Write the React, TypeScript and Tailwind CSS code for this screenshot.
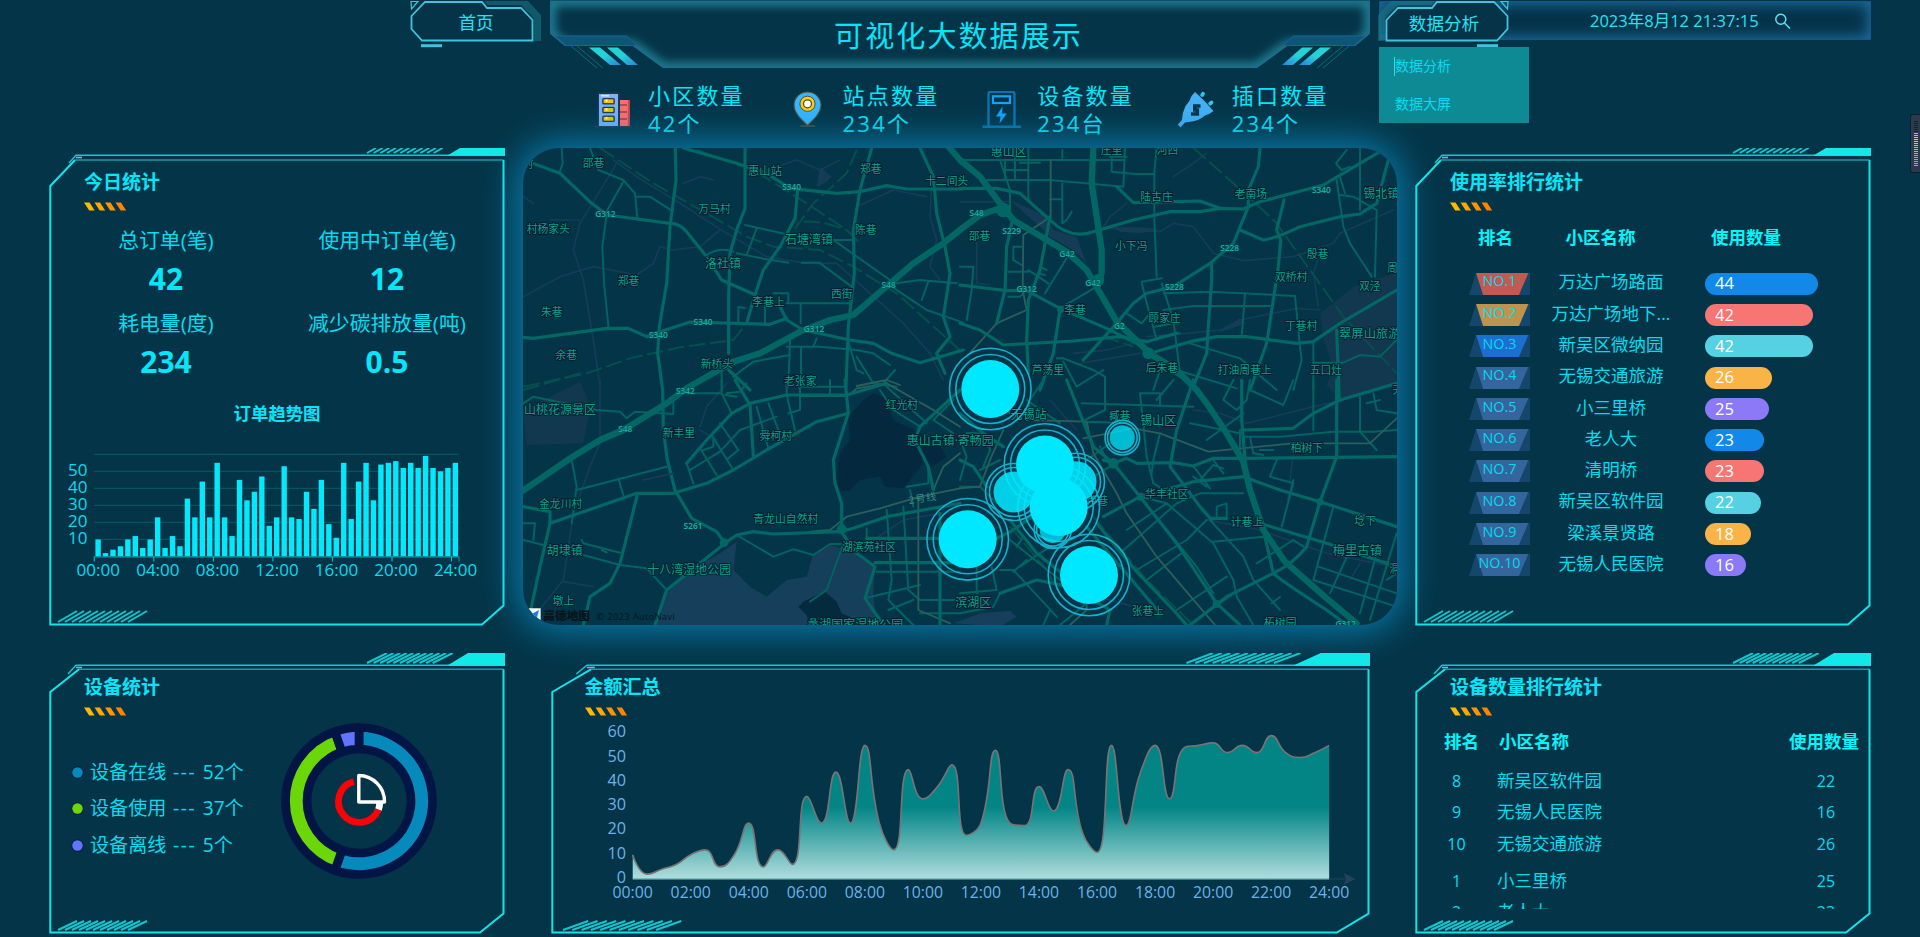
import React from "react";

const SERIES = [
  10, 2, 4, 6, 10, 12, 5, 10, 23, 5, 12, 6, 34, 23, 44, 23, 55, 23, 12, 45, 33, 38, 47, 18, 23, 53, 23, 22, 38, 28,
  45, 19, 11, 55, 22, 44, 55, 33, 54, 55, 56, 52, 55, 52, 59, 52, 50, 52, 55,
];

/* ---------- panel frame ---------- */

type FrameProps = { w: number; h: number; sx?: number; tall?: boolean };

function Frame({ w, h, sx = 1, tall = false }: FrameProps) {
  const g = tall
    ? { y1: 12.3, y2: 16.3, cy: 39, cx: 30, ox: 19, oy: 21, sd: 58, si: 37, st0: 138, st1: 69, sh: 10, sk: 20, rd: 25, rv: 19 }
    : { y1: 7.3, y2: 12, cy: 38, cx: 26, ox: 20, oy: 15, sd: 58, si: 45, st0: 138, st1: 68, sh: 5, sk: 9, rd: 23, rv: 19 };
  const top: number[] = [];
  for (let i = 0; i < 11; i++) top.push(i);
  return (
    <svg className="pointer-events-none absolute inset-0" width={w} height={h} viewBox={`0 0 ${w} ${h}`} fill="none">
      <path d={`M${g.ox * sx} ${g.oy} L${27 * sx} ${g.y1} H${w}`} stroke="#12c9d0" strokeWidth="1.4" />
      <path d={`M${27 * sx} ${g.y1 + 2.2} h${6 * sx}`} stroke="#5cc3d6" strokeWidth="1.6" />
      <path d={`M${g.cx * sx} ${g.y2} H${w - 1.5}`} stroke="#0e9fa8" strokeWidth="1.6" />
      <path
        d={`M${g.cx * sx} ${g.y2} L1.3 ${g.cy} V${h - 1.4} H${w - g.rd * sx} L${w - 1.5} ${h - 1.4 - g.rv} V${g.y2}`}
        stroke="#12e4e8"
        strokeWidth="2"
      />
      <path d={`M${w - g.sd * sx} ${g.y1 + 0.5} L${w - g.si * sx} 0 H${w} V${g.y1 + 0.5} Z`} fill="#12e8e8" />
      {top.map((i) => (
        <path
          key={i}
          d={`M${w - (g.st0 - (i * (g.st0 - g.st1)) / 10.5) * sx} ${g.sh} l${g.sk * sx} ${-g.sh}`}
          stroke="#12c6cc"
          strokeWidth="2"
        />
      ))}
      {top.map((i) => (
        <path
          key={i}
          d={`M${(9 + i * 7) * sx} ${h - 4} l${19 * sx} ${tall ? -9 : -11}`}
          stroke="#12c6cc"
          strokeWidth="2"
        />
      ))}
    </svg>
  );
}

function Panel({
  title,
  children,
  className,
  ...frame
}: FrameProps & { title: string; children: React.ReactNode; className: string }) {
  const inset = frame.sx ? "ml-[33.5px]" : "ml-[35px]";
  return (
    <section className={`relative flex flex-col ${className}`}>
      <Frame {...frame} />
      <h2 className={`mt-[21px] flex h-[27px] items-center text-[19px] font-bold leading-none ${inset}`}>{title}</h2>
      <svg className={`mt-[6px] shrink-0 ${inset}`} width="44" height="9" viewBox="0 0 44 9">
        {["#ffb800", "#ffa600", "#ff9400", "#ff8200"].map((c, i) => (
          <path key={c} d={`M${i * 10.5} 0.5 h5.5 l5.2 8 h-5.5 z`} fill={c} />
        ))}
      </svg>
      {children}
    </section>
  );
}

/* ---------- header ---------- */

function NavFrame({ flip }: { flip?: boolean }) {
  return (
    <svg
      className={flip ? "absolute inset-0 -scale-x-100" : "absolute inset-0"}
      width="132"
      height="48"
      viewBox="0 0 132 48"
      fill="none"
    >
      <path d="M74 1 H118 L131 15 V41 H124 V18 L111 5 H78 Z" fill="#1b7d90" opacity="0.5" />
      <path d="M1.5 16 L15 2 H72 L77 8 H111 L122.5 20 V40.5 H12 L1.5 29 Z" fill="#053347" stroke="#3fc4dc" strokeWidth="1.8" />
      <path d="M1 1.5 H8 L1.5 9 Z" stroke="#3fc4dc" strokeWidth="1.2" />
      <path d="M11 45.7 H32" stroke="#3fc4dc" strokeWidth="3" />
    </svg>
  );
}

function TitleFrame() {
  const wing = (
    <>
      <path d="M5 36 H77 L87 45.5 H16 Z" fill="#0d5674" stroke="#1c60a0" strokeWidth="1" />
      <path d="M21 46 L47 68 M27 46 L53 68" stroke="#0d6a72" strokeWidth="1" />
      <path d="M39 47.5 H50 L71 65 H60 Z" fill="url(#slash)" />
      <path d="M57 47.5 H68 L88 65 H77 Z" fill="url(#slash)" />
    </>
  );
  const outline = "M0.5 1 H819.5 V33.5 L805 45.5 H737 L707 67.5 H113 L83 45.5 H15 L0.5 33.5 Z";
  return (
    <svg className="absolute inset-0" width="820" height="70" viewBox="0 0 820 70" fill="none">
      <defs>
        <linearGradient id="slash" x1="0" y1="0" x2="1" y2="1">
          <stop offset="0.5" stopColor="#22d3d8" />
          <stop offset="1" stopColor="#2a7fd8" />
        </linearGradient>
        <clipPath id="titleClip">
          <path d={outline} />
        </clipPath>
        <filter id="soft" x="-5%" y="-30%" width="110%" height="160%">
          <feGaussianBlur stdDeviation="5" />
        </filter>
      </defs>
      <g clipPath="url(#titleClip)">
        <path d={outline} stroke="#21829a" strokeWidth="10" filter="url(#soft)" />
      </g>
      <path d={outline} stroke="#1d6f92" strokeWidth="1.2" />
      {wing}
      <g transform="translate(820 0) scale(-1 1)">{wing}</g>
    </svg>
  );
}

const BuildingIcon = () => (
  <svg width="40" height="38" viewBox="0 0 40 38">
    <rect x="4.6" y="1.2" width="22" height="34.5" rx="1.5" fill="#26364d" />
    <rect x="6" y="3" width="19" height="32" fill="#74b4fb" />
    <rect x="8" y="4" width="8" height="1.5" fill="#d7eaff" />
    {[7, 15.8, 24.6].map((y) => (
      <g key={y}>
        <rect x="9.2" y={y} width="12.6" height="6.4" rx="1.5" fill="#2b3550" />
        <rect x="10.6" y={y + 1.3} width="9.8" height="3.8" fill="#e9c806" />
        <rect x="12.5" y={y + 1.3} width="2" height="2.6" fill="#fff27a" />
      </g>
    ))}
    <rect x="27" y="9" width="9.6" height="26.5" fill="#ff6f6c" />
    <path d="M27 14 H34 M27 21 H34 M27 28 H34" stroke="#5b2c3d" strokeWidth="1.1" />
    <path d="M35.6 9 V35" stroke="#e03e4f" strokeWidth="1.5" />
    <path d="M0.5 35.8 H39.5" stroke="#26364d" strokeWidth="1.4" />
  </svg>
);

const PinIcon = () => (
  <svg width="40" height="38" viewBox="0 0 40 38">
    <path
      d="M19.5 1 C11.8 1 6 6.8 6 14.2 C6 22 13 28 19.5 34.5 C26 28 33 22 33 14.2 C33 6.8 27.2 1 19.5 1 Z"
      fill="#37b6ff"
      stroke="#5a4a35"
      strokeWidth="1.1"
    />
    <circle cx="19.5" cy="12.8" r="7.6" fill="#ffcf05" stroke="#5a4a35" strokeWidth="1" />
    <circle cx="19.5" cy="12.8" r="4" fill="#fff" stroke="#5a4a35" strokeWidth="1.3" />
    <path d="M12.5 35 H27" stroke="#5a4a35" strokeWidth="1.5" />
  </svg>
);

const ChargerIcon = () => (
  <svg width="40" height="38" viewBox="0 0 40 38" fill="none">
    <path d="M6.5 35.5 V3 Q6.5 0.8 9 0.8 H30 Q32.5 0.8 32.5 3 V35.5" stroke="#0b72ad" strokeWidth="2.4" />
    <path d="M0.5 35.7 H39" stroke="#0b72ad" strokeWidth="2.6" />
    <rect x="11" y="5.3" width="17" height="6.7" stroke="#12a3ff" strokeWidth="2.2" />
    <path d="M20.5 15.5 L14 25.5 H18.5 L17.5 32.5 L24.8 22.5 H20 Z" fill="#12a3ff" />
  </svg>
);

const PlugIcon = () => (
  <svg width="40" height="38" viewBox="0 0 40 38" fill="none">
    <path
      d="M18 1 L27 9.500 L36.500 20 Q33 23 28 24.500 Q22 30 11.500 31 L8 31.500 L3.500 36.500 L0.800 33.500 L5 29 Q5 22 8.500 15 Q13 10.500 14.500 5 Z"
      fill="#44b1f5"
    />
    <path d="M26 2.800 L25.200 4 M34.500 11.500 L33.200 12.500" stroke="#2fc8ee" strokeWidth="3.800" strokeLinecap="round" />
    <path d="M23.500 15 H17.800 V19 H20.300 V23 H14" stroke="#06344a" strokeWidth="3.600" />
  </svg>
);

const STATS = [
  { label: "小区数量", value: "42个", icon: <BuildingIcon /> },
  { label: "站点数量", value: "234个", icon: <PinIcon /> },
  { label: "设备数量", value: "234台", icon: <ChargerIcon /> },
  { label: "插口数量", value: "234个", icon: <PlugIcon /> },
];

function Header() {
  return (
    <header className="flex h-[148px] shrink-0 flex-col">
      <div className="flex h-[70px] items-start pl-[410px] text-[#22e4f5]">
        <div className="relative flex h-[48px] w-[132px] items-center justify-center pb-[2px] text-[17.6px] leading-none">
          <NavFrame />
          <span className="relative">首页</span>
        </div>
        <div className="relative ml-[8px] flex h-[70px] w-[820px] items-center justify-center pr-[3px] pt-px">
          <TitleFrame />
          <h1 className="relative text-[29px] leading-none tracking-[2.1px] text-[#05e6fb]">可视化大数据展示</h1>
        </div>
        <div className="relative z-20 ml-[9px] mt-[1px] flex h-[39px] w-[492px] items-center border border-[#14558c] bg-[#05334a] shadow-[inset_0_0_14px_2px_#1d70a0]">
          <div className="relative flex h-[48px] w-[132px] items-center justify-center pr-[4px] pt-[7px] text-[17.6px] leading-none">
            <div className="absolute left-[-3px] top-[3px] h-[48px] w-[132px]">
              <NavFrame flip />
            </div>
            <span className="relative">数据分析</span>
          </div>
          <div className="ml-[78px] flex items-center gap-[15px] pt-px text-[16.5px] leading-none">
            <span className="whitespace-nowrap">2023年8月12 21:37:15</span>
            <svg width="17" height="17" viewBox="0 0 17 17" fill="none" stroke="#5be4f0" strokeWidth="1.5">
              <circle cx="6.8" cy="6.3" r="5" />
              <path d="M10.5 10 L16 15.5" />
            </svg>
          </div>
          <ul className="absolute left-[-1px] top-[45px] w-[150px] bg-[#0d8a94] text-[14px] leading-none text-[#05dcf2]">
            <li className="flex h-[38px] items-center pl-[15px]">
              <span className="h-[19px] w-px bg-[#20e4f4]" />
              数据分析
            </li>
            <li className="flex h-[38px] items-center pl-[16px]">数据大屏</li>
          </ul>
        </div>
      </div>
      <div className="flex pl-[593px] pt-[12px]">
        {STATS.map((s) => (
          <div key={s.label} className="flex w-[194.6px] items-start">
            <div className="mt-[9px] h-[38px] w-[40px]">{s.icon}</div>
            <div className="ml-[15px] whitespace-nowrap text-[22px] leading-[27.5px] tracking-[2.2px] text-[#05e6fb]">
              <div>{s.label}</div>
              <div>{s.value}</div>
            </div>
          </div>
        ))}
      </div>
    </header>
  );
}

/* ---------- city map ---------- */

type Quad = {
  dx: number;
  dy: number;
  major: string[];
  medium: string[];
  minor: string[];
  rail: string[];
  metro: string[];
  river: string[];
  labels: [string, number, number, number?][];
  tags: [string, number, number][];
};

const QUADS: Quad[] = [
  {
    dx: 0,
    dy: 0,
    major: [
      "M0 1058 L150 955 L240 900 L310 870 L440 790 L500 745 L640 665 L720 640 L840 575 L930 540 L1000 525 L1110 430 L1180 370 L1270 310 L1330 262 L1380 225 L1440 205",
    ],
    medium: [
      "M10 60 L120 100 L215 190 L262 225 L450 250 Q480 250 500 275 L560 350 L605 420 L700 462",
      "M466 24 L468 120 L450 260 L440 430 L418 560 L413 640 L428 750 L430 870 L442 960 L465 1050",
      "M10 592 L40 595 L260 565 L325 565 L380 590 L420 575 L510 546 L750 553 L800 535",
      "M675 24 V205 L650 270 L630 340 L626 470 V640 M626 690 L690 750",
      "M1055 24 L1020 150 L1000 270 L1003 400 L985 560 L978 740",
      "M490 24 L650 70 L740 100 L810 145 L950 160 L1020 155 L1100 137 L1160 147 H1330",
      "M833 150 L825 235 L780 320 L730 390 L700 480 L680 550",
      "M780 500 L800 540 L850 570 L990 600 L1060 610 L1115 640 L1200 668 L1330 630",
      "M1200 24 L1240 110 L1250 220 L1275 320 L1290 400 L1270 530 L1290 590 L1250 640 L1275 700",
    ],
    minor: [
      "M125 24 L128 70 L118 100",
      "M210 24 L235 90 L310 120 L345 160 L352 235 M352 170 H390 L455 212",
      "M310 125 L262 210 L247 320 L252 430 L266 565",
      "M675 255 L810 285 M710 265 L680 345 M650 340 L740 358 L805 368 M845 368 H898 L995 440",
      "M560 345 Q600 320 640 335",
      "M800 490 H990 M842 490 V550 M735 485 V550 M760 460 H805 V485",
      "M800 620 H900 L1010 630 L1060 640 L1110 675 M890 595 L880 620 M843 620 V740 M810 600 L805 740",
      "M605 690 V750 M640 710 L700 665 L810 645 M655 545 V500 L675 505",
      "M1115 440 L1220 510 L1330 548 M1130 430 L1200 420 L1310 430 M1225 425 L1205 480",
      "M940 300 H1000 M940 300 L1110 420",
      "M985 605 L1010 690 L1030 700 M1010 650 L1060 730 L1130 740 M1125 690 L1090 730",
    ],
    rail: [
      "M240 24 L400 130 L560 220 L680 290 L760 320 L900 330 L1000 380 L1130 460 L1330 640",
      "M530 30 L700 90 L860 190 L980 270 L1020 310",
      "M10 740 L200 700 L330 655 L480 622 L640 600 L680 550",
      "M1010 30 L980 100 L880 190 L800 300",
      "M850 245 Q900 240 980 270",
    ],
    metro: ["M1010 738 L1100 720 L1140 735"],
    river: [
      "M280 60 L350 110 L480 190 L620 280 L740 350 L860 370 L950 370 L1050 460 L1150 550 L1230 640 L1270 720",
      "M290 70 L180 250 L160 330 L190 420 L220 600 L240 740",
      "M10 470 L120 410 L220 380 L350 405 L400 370 L420 320 L455 330 L540 320 L600 270",
      "M1235 120 L1230 230 L1250 300 L1230 380 L1260 420",
      "M490 130 L540 110 L580 120",
      "M740 90 L830 60 L900 90 L960 60",
      "M40 190 L10 170 M90 240 L180 240",
      "M1010 200 L1120 150 L1220 170",
    ],
    labels: [
      ["邵巷", 188, 68],
      ["惠山站", 684, 92, 34],
      ["郑巷", 1020, 86],
      ["十二间头", 1215, 122],
      ["万马村", 535, 206],
      ["村杨家头", 20, 266],
      ["陈巷", 1005, 268],
      ["石塘湾镇", 795, 298, 36],
      ["洛社镇", 555, 370, 36],
      ["郑巷", 293, 421],
      ["李巷上", 697, 484],
      ["西街", 933, 460],
      ["朱巷", 63, 514],
      ["余巷", 106, 645],
      ["新桥头", 542, 672],
      ["老张家", 792, 722],
      ["村", 8, 70],
    ],
    tags: [
      ["S340", 815, 140],
      ["G312", 256, 223],
      ["S48", 1106, 434],
      ["S340", 549, 546],
      ["S340", 415, 586],
      ["G312", 882, 566],
    ],
  },
  {
    dx: 1320,
    dy: 0,
    major: [
      "M-60 -10 L0 60 L60 110 L120 190 L160 240 L320 335 L380 390 L415 450 L470 545 L570 640 L650 690 L710 750 L740 790 L800 880 L850 965 L870 1050 L910 1170 L975 1265 L1100 1375 L1190 1450",
      "M400 24 L395 130 L425 330 V400 L412 440",
    ],
    medium: [
      "M0 145 H110 L180 160 L270 240 Q330 300 400 275 L520 240 L630 215 H720 L780 205 L850 207 L900 185 L1090 135 L1200 70 L1260 35",
      "M470 140 L520 188 L640 185 L720 183 L780 205",
      "M900 24 L895 80 L865 150 V200 L820 310 L750 370 L640 440 L560 460 L520 490 L470 550 L370 660",
      "M840 270 L910 300 Q950 295 1020 260 L1140 230 L1200 222 L1250 190 L1285 60",
      "M972 180 L950 270 L962 300 L955 380 L920 610 L870 750",
      "M755 370 V420 L745 560 L740 640 L700 740",
      "M0 435 L140 452 H200 L300 505 L440 565 L540 615 L570 640",
      "M155 250 L140 320 L135 450 L110 550",
      "M270 230 L240 390 L205 480 L200 600 L205 700",
      "M0 550 L60 570 L130 615 L340 603 L480 590 L560 605 L650 580",
      "M300 510 L280 640 L240 750",
      "M570 640 L690 605 L770 590 L860 590 L1010 610 L1060 605 L1140 550 L1310 450",
      "M1130 570 L1138 780",
    ],
    minor: [
      "M10 60 H490 M80 120 H270 L490 140 L495 24",
      "M120 60 L150 150 V240 M135 60 V120 M165 24 V120 M205 24 V180 M135 90 H205",
      "M180 68 H240 M307 30 V55 M270 178 H307 M307 130 V250 L320 240 L335 215",
      "M455 50 V95 L525 102 H580 M590 24 L583 100 V240 L590 410 M450 50 H500",
      "M300 505 L410 440 M320 355 L255 460 M205 390 L265 430 M145 395 H205 M145 470 H180 L190 460 M160 320 H185 M160 320 V360 L185 375",
      "M610 460 L750 455 L1005 468 L1020 620 L1025 660 L1000 750",
      "M610 510 L700 498 H930 M855 460 L845 590",
      "M545 425 L605 415 M545 425 L555 470 L590 600 M605 430 L640 540 L660 700 M500 520 L545 550 L570 520 M585 560 L640 550 M600 590 L660 580",
      "M690 610 L840 655 L880 690 L950 750 M650 690 L830 745",
      "M1060 605 V750 M1060 668 H1150 L1200 645 L1260 650 L1310 600",
      "M1130 120 L1150 260 L1170 310 L1235 410 M1245 410 L1250 210 L1180 170 L1140 165 M1140 110 L1155 160",
      "M1200 24 V210 M1160 30 L1128 70 L1145 90 L1170 80",
      "M290 655 H310 L400 690 L435 710 V750 M310 665 L350 740 L430 690",
      "M0 380 H40 L35 450 L20 540 M560 640 L700 740 M600 690 L580 750",
      "M240 380 L260 390 M235 400 L255 405",
    ],
    rail: ["M700 24 L860 165 L950 250 L1150 530 L1310 700", "M430 590 L520 620"],
    metro: ["M272 60 V230 L190 285 L188 450 L200 510 L110 550 L20 650"],
    river: [
      "M0 185 L150 185",
      "M430 260 L450 230 L500 190",
      "M450 265 L600 275 L640 250 L700 260 L760 340 L850 362 L1000 350 L1120 310 L1140 280 L1300 210",
      "M640 110 L700 70 L740 40",
      "M340 640 L440 630 L560 600 M560 590 L680 580 L780 570 L840 540 L1010 505 L1080 510",
      "M1080 340 L1060 400 L1075 500",
      "M360 670 L540 640",
      "M50 290 V430 L90 435",
    ],
    labels: [
      ["惠山区", 92, 35, 36],
      ["庄里", 422, 30],
      ["河西", 590, 30],
      ["陆古庄", 541, 170],
      ["老南场", 824, 160],
      ["锡北镇", 1210, 160, 36],
      ["邵巷", 26, 286],
      ["小下冯", 465, 318],
      ["殷巷", 1040, 342],
      ["双桥村", 945, 411],
      ["周", 1281, 382],
      ["双泾", 1197, 438],
      ["李巷", 313, 510],
      ["顾家庄", 565, 533],
      ["丁巷村", 975, 556],
      ["翠屏山旅游", 1137, 581, 37],
      ["后朱巷", 557, 683],
      ["芦荡里", 215, 688],
      ["打油周巷上", 773, 690],
      ["五口灶", 1049, 690],
    ],
    tags: [
      ["S48", 50, 220],
      ["S229", 155, 273],
      ["G42", 321, 342],
      ["G42", 399, 428],
      ["G312", 200, 447],
      ["S340", 1084, 150],
      ["S228", 809, 325],
      ["S228", 643, 440],
      ["G2", 478, 557],
    ],
  },
  {
    dx: 0,
    dy: 720,
    major: [],
    medium: [
      "M10 380 L90 395 V430 L350 340 H460 L560 310 L640 270 L740 210 L890 125 L985 100",
      "M90 430 L60 560 L30 700",
      "M352 345 L300 550 L270 610 L210 650 L190 735",
      "M465 330 L515 415 L590 455 L615 490 L540 550 L440 630 L405 735",
      "M615 490 L650 465 L700 455 L760 462 L960 455 L1000 445 L1100 410 L1320 370",
      "M500 250 L560 180 L635 100 L690 70 L800 45 H980 L1100 10",
      "M975 0 L985 100 L940 240 L945 310 L965 370 V450",
      "M645 0 L690 75 L695 150 L700 230",
      "M1320 30 L1200 140 L1185 180 L1225 260 L1240 330",
      "M960 450 L1010 520 L1065 560 L1035 655 L1090 735",
      "M1260 400 V735",
      "M1040 475 H1320 M1065 548 H1320",
    ],
    minor: [
      "M155 240 L170 320 L155 430 M170 330 L440 260 M295 295 L310 345",
      "M185 480 L190 490 L300 518 M190 525 L300 555 L380 565 L440 630 M245 510 L260 518",
      "M650 465 L760 530 L820 508 L880 525 L930 492 H970 L920 630 L870 665",
      "M500 250 L520 310 M510 270 L600 215 L660 150 L770 110 M540 205 L590 285 M600 130 L655 210 L625 235 M575 165 L640 270 M710 80 L745 205 M745 70 L775 150 M550 210 L580 200 V170",
      "M605 0 V40 L635 100 M800 45 L825 150 M800 0 V45 M840 0 V90 L805 100 M930 0 V45 M835 20 H980",
      "M500 40 H600 M230 90 L300 95 L320 115 L345 95 L460 102 V60",
      "M620 40 L660 35 L680 10 M615 45 L650 50",
      "M1100 20 L1220 130 M1300 60 L1240 120 L1300 160 M1080 30 L1120 90 L1200 140",
      "M1040 445 V480 M1100 390 L1115 600 L1105 660 L1180 735 M1150 380 L1165 630 L1200 660 H1320",
      "M1070 575 H1320 M1035 655 L1200 615 M1105 690 L1180 660 M1200 700 H1320 M1225 260 V310 L1160 320",
      "M10 430 H45 L40 480 M10 480 L70 495 M1170 330 L1180 380",
      "M10 70 L40 50 L230 90",
    ],
    rail: ["M10 30 L180 -20"],
    metro: [
      "M870 455 L930 450 L980 410 L1080 385 L1200 350 L1320 325",
      "M980 50 L1010 25 L1100 10 L1240 90 L1320 140",
      "M1240 330 L1270 260 L1320 220",
      "M1195 360 V690 L1290 730",
      "M840 48 H980",
    ],
    river: [
      "M240 0 V190 L210 260 L160 400 L130 600 L50 700",
      "M540 140 L560 80 L620 10 M540 150 L590 180",
      "M1060 480 L1150 420 L1260 400",
      "M370 300 L460 280",
      "M130 605 L220 620",
    ],
    labels: [
      ["山桃花源景区", 12, 90, 36],
      ["新丰里", 428, 157],
      ["舜柯村", 719, 168],
      ["红光村", 1097, 75],
      ["惠山古镇·寄畅园", 1160, 181, 36],
      ["金龙川村", 57, 371],
      ["青龙山自然村", 700, 415],
      ["湖滨苑社区", 966, 500],
      ["胡埭镇", 80, 512, 36],
      ["十八湾湿地公园", 382, 569, 36],
      ["墩上", 98, 661],
      ["蠡湖国家湿地公园", 862, 733, 36],
    ],
    tags: [
      ["S342", 496, 32],
      ["S48", 316, 147],
      ["S261", 519, 437],
    ],
  },
  {
    dx: 1320,
    dy: 720,
    major: [],
    medium: [
      "M320 0 L360 100 L400 200 L460 250 L540 350 L650 490 L770 670 L840 735",
      "M430 240 L460 250 L500 235 L530 250 L640 248 L700 258 L760 235 H850 L1310 230",
      "M430 410 L540 350 L700 305 L850 290 L960 330 L1080 365 L1310 440",
      "M1130 0 V230 L1080 365 L1040 500 Q1000 550 940 580 L800 650 L690 735",
      "M1310 10 L1140 60 L1060 100 L1000 145 L850 150",
      "M845 0 V120 L855 240",
      "M750 415 H800 M900 430 L1100 490 L1310 560",
      "M910 450 L940 580 Q960 600 1100 690 L1160 735",
      "M410 430 L530 575 L640 690 L680 735",
      "M380 440 L600 700",
      "M700 0 L650 150 L630 260 L720 380 L755 420",
      "M0 560 L60 500 L160 450 L230 400",
      "M120 640 L230 600 L330 620 L450 690 L440 735",
      "M0 100 L70 160 L130 200 M0 240 L40 260 L80 320",
      "M150 420 L230 520 L330 600",
    ],
    minor: [
      "M365 70 L700 80 M370 125 L500 128 M435 0 V90 L375 120 M200 60 L300 130 M250 0 L210 60 L200 120",
      "M540 40 H600 V75 M540 40 L560 230 L580 310 L630 340 M600 160 L580 240 L575 280",
      "M640 0 L590 60 M690 130 L840 160 M740 180 L850 100",
      "M790 60 L830 90 L860 60 L870 0 M790 60 L820 0 M870 30 L970 75 L1000 0",
      "M850 170 H960 L1120 155 H1240 L1310 150 M870 170 L880 220 L910 225 M900 210 H940",
      "M1060 0 V150 M1200 50 V155 L1250 210 M1240 40 L1250 90 L1310 100 M1220 70 L1260 60",
      "M950 240 L930 290 L1000 310 L965 440 M1000 300 L985 360",
      "M480 520 L650 370 L720 340 L850 340 M540 350 L620 370 L760 490 L820 600 L830 650 L880 735",
      "M530 570 L680 480 L740 420 M560 600 L670 515 M650 690 L800 590 M690 735 L820 640 M580 400 L710 560 L760 640 M500 450 L620 370",
      "M750 420 L850 530 L880 600 L960 690 M760 485 L910 470 M935 670 L960 650 M770 410 V380 L800 370 V410",
      "M1075 560 L1310 640 M1060 600 L1310 680 M1120 380 L1060 600 M1310 460 L1230 720 M1250 520 L1200 700 M1170 510 L1110 640",
      "M700 258 L750 325 M760 240 L790 280 M720 300 L760 255 L790 265 M740 320 L700 290",
      "M120 570 H160 L290 710 M150 480 L300 600 M180 560 L270 500 M50 500 V640 M0 640 L110 630 L95 560 M160 575 L200 540 M190 470 L170 500 M0 700 L100 680 L120 640",
      "M0 180 L20 230 L0 300 M20 160 Q80 150 90 210 L70 260 M0 320 H60 L110 370 M60 270 L120 240 M110 60 L150 100",
      "M380 240 L450 190 M330 330 L450 260 M420 200 L440 240 M300 735 L380 670 M270 690 L250 735",
      "M890 550 L1000 480 L1030 500 M840 210 V150 M1280 600 L1310 580",
    ],
    rail: ["M400 410 L560 600 L700 735", "M150 440 L260 570 L300 640"],
    metro: [
      "M200 120 L380 125 L400 220 L470 340 L500 400 L590 530 L765 735",
      "M370 175 L520 145 L600 160 L745 215 L1000 190 L1230 190 L1310 115",
      "M0 325 L60 320 L90 240 L130 150 M380 125 L390 180",
      "M330 735 L380 690 L380 640",
    ],
    river: [
      "M700 90 L780 100 L860 130 L1060 80 L1150 60",
      "M380 640 L520 680",
      "M740 420 L900 450 L1100 520 L1300 560",
      "M270 60 L350 150",
      "M1000 220 L990 300 M1200 550 L1170 600",
    ],
    labels: [
      ["无锡站", 152, 105, 36],
      ["臧巷", 447, 108],
      ["锡山区", 541, 121, 36],
      ["柏树下", 992, 204],
      ["华丰社区", 556, 341],
      ["芦巷", 380, 361],
      ["计巷上", 812, 424],
      ["埝下", 1183, 421],
      ["梅里古镇", 1118, 513, 37],
      ["滨湖区", -14, 669, 36],
      ["张巷上", 515, 693],
      ["柘树园", 912, 728],
      ["天", 1297, 28],
      ["洞", 1288, 566],
    ],
    tags: [["G312", 1157, 733]],
  },
];

const MARKERS = [
  { x: 1122.3, y: 437.7, r: 12.5, rings: [14.8, 17.3], o: 0.75 },
  { x: 1052.7, y: 530, r: 13, rings: [16, 18.5], o: 0.75 },
  { x: 1014, y: 492, r: 20.5, rings: [24.5, 28.5], o: 0.87 },
  { x: 1076, y: 481.7, r: 20.5, rings: [24.5, 28.5], o: 0.87 },
  { x: 990.3, y: 389, r: 29, rings: [34.5, 40.8], o: 1 },
  { x: 1045, y: 464.5, r: 29, rings: [34.5, 40.8], o: 1 },
  { x: 1058.7, y: 507, r: 29, rings: [34.5, 40.8], o: 1 },
  { x: 967.7, y: 539.3, r: 29, rings: [34.5, 40.8], o: 1 },
  { x: 1089, y: 575, r: 29, rings: [34.5, 40.8], o: 1 },
];

function CityMap() {
  return (
    <div className="h-[477px] w-[874px] overflow-hidden rounded-[36px] bg-[#033447] shadow-[0_0_38px_5px_#0a80b4]">
      <svg width="874" height="477" viewBox="9 24 2622 1431" fill="none" strokeLinejoin="round" strokeLinecap="round">
        <path d="M10 810 L180 725 L200 770 L210 810 L190 910 L20 915Z" fill="#11384f" />
        <path d="M2640 395 L2500 440 L2400 520 L2410 600 L2440 680 L2420 735 L2460 785 L2640 730Z" fill="#11384f" />
        <path d="M900 80 L935 110 L920 125 L890 142Z" fill="#143c57" />
        <path d="M1470 180 L1570 225 L1600 270 L1670 290 L1700 370 L1660 330 L1590 290 L1560 260Z" fill="#143c57" />
        <path d="M1780 260 L1860 262 L1920 268 L1860 280 L1800 275Z M2090 580 L2160 535 L2180 550Z" fill="#143c57" />
        <path
          d="M650 1205 L600 1240 L500 1300 L440 1360 L405 1460 H1070 L1060 1360 L1065 1280 L1010 1240 L930 1215 L880 1240 L860 1310 L800 1320 L740 1370 L690 1340 L640 1290Z"
          fill="#153f5a"
        />
        <path d="M1300 1450 L1380 1420 L1470 1412 L1490 1430 L1440 1460Z" fill="#153f5a" />
        <path
          d="M850 1385 L880 1370 L915 1355 L950 1385 L965 1420 L1010 1440 V1460 H870 L860 1425 L835 1400Z"
          fill="#05293d"
        />
        <path
          d="M1060 760 L1100 775 L1120 840 L1160 860 L1250 900 L1280 950 L1230 985 L1210 970 L1150 1045 L1095 1040 L1080 1010 L1020 1020 L990 1050 L960 1055 L945 1020 L960 940 L990 900 L985 830 L1030 780Z"
          fill="#04293f"
        />
        {QUADS.map((q) => (
          <g key={`r${q.dx}-${q.dy}`} transform={`translate(${q.dx} ${q.dy})`}>
            {q.river.map((d) => (
              <path key={d} d={d} stroke="#163c5a" strokeWidth="5" />
            ))}
            {q.rail.map((d) => (
              <path key={d} d={d} stroke="#05504f" strokeWidth="6" strokeDasharray="50 14" strokeLinecap="butt" />
            ))}
            {q.minor.map((d) => (
              <path key={d} d={d} stroke="#016462" strokeWidth="6" />
            ))}
            {q.metro.map((d) => (
              <path key={d} d={d} stroke="#2b5f5c" strokeWidth="5.5" />
            ))}
            {q.medium.map((d) => (
              <path key={d} d={d} stroke="#016866" strokeWidth="9.5" />
            ))}
          </g>
        ))}
        {QUADS.map((q) =>
          q.major.map((d) => (
            <path key={d} d={d} transform={`translate(${q.dx} ${q.dy})`} stroke="#016664" strokeWidth="19" />
          )),
        )}
        <g fill="#016664">
          <circle cx="1450" cy="210" r="22" />
          <circle cx="1735" cy="420" r="18" />
          <circle cx="1885" cy="640" r="18" />
          <circle cx="965" cy="1168" r="15" />
          <circle cx="612" cy="1208" r="13" />
          <circle cx="1780" cy="970" r="16" />
          <circle cx="1862" cy="1070" r="12" />
          <circle cx="1622" cy="508" r="11" />
          <circle cx="2400" cy="1085" r="11" />
          <circle cx="2090" cy="1392" r="12" />
        </g>
        {QUADS.map((q) => (
          <g key={`t${q.dx}-${q.dy}`} transform={`translate(${q.dx} ${q.dy})`}>
            {q.tags.map(([t, x, y]) => (
              <text
                key={`${t}${x}`}
                x={x}
                y={y + 9}
                textAnchor="middle"
                fontSize="25"
                fontWeight="600"
                fill="#19aca3"
                stroke="#01504f"
                strokeWidth="2"
                paintOrder="stroke"
              >
                {t}
              </text>
            ))}
            {q.labels.map(([t, x, y, s]) => (
              <text
                key={`${t}${x}`}
                x={x}
                y={y + 13}
                fontSize={s ?? 32.5}
                fill="#07a095"
                stroke="#021f2b"
                strokeWidth="6"
                paintOrder="stroke"
              >
                {t}
              </text>
            ))}
          </g>
        ))}
        <text x="1168" y="1092" fontSize="30" letterSpacing="3" fill="#3f8f88" transform="rotate(-9 1168 1092)">
          2号线
        </text>
        <path d="M26 1405 H62 V1443 H48 L26 1418Z" fill="#f4f9f4" />
        <path d="M30 1425 L57 1410 L50 1436 L42 1426Z" fill="#1f7bf0" />
        <text x="70" y="1440" fontSize="35" fontWeight="900" fill="#08141c">
          高德地图
        </text>
        <text x="230" y="1441" fontSize="27" letterSpacing="1.5" fill="#04161f">
          © 2023 AutoNavi
        </text>
        <g transform="translate(-1560 -420) scale(3)">
          {MARKERS.map((m) =>
            m.rings.map((r) => (
              <circle key={`${m.x}-${r}`} cx={m.x} cy={m.y} r={r} stroke="#16b0cc" strokeWidth="1.6" />
            )),
          )}
          {MARKERS.map((m) => (
            <circle key={`${m.x}`} cx={m.x} cy={m.y} r={m.r} fill="#00e8ff" opacity={m.o} />
          ))}
        </g>
      </svg>
    </div>
  );
}

/* ---------- today ---------- */

const TODAY = [
  ["总订单(笔)", "42"],
  ["使用中订单(笔)", "12"],
  ["耗电量(度)", "234"],
  ["减少碳排放量(吨)", "0.5"],
];

function OrderBars() {
  const x0 = 94.3;
  const step = 7.443;
  const base = 557.5;
  return (
    <svg width="456" height="170" viewBox="49 429 456 170" className="text-[#08dcf0]">
      {[10, 20, 30, 40, 50, 60].map((v) => (
        <g key={v}>
          <path d={`M${x0} ${base - v * 1.703} h364.7`} stroke="#07545f" strokeWidth="1.2" />
          {v < 60 && (
            <text x="87.5" y={base - v * 1.703 + 4.6} textAnchor="end" fontSize="17" fill="currentColor">
              {v}
            </text>
          )}
        </g>
      ))}
      {SERIES.map((v, i) => (
        <rect key={i} x={x0 + i * step + 1.1} y={base - v * 1.703} width="5.4" height={v * 1.703} fill="#04e8fc" />
      ))}
      <path d={`M${x0} ${base + 0.3} h364.7`} stroke="#0d9bab" strokeWidth="1.2" />
      <path d={`M${x0 + 364.7} ${base} v5`} stroke="#0d9bab" />
      {["00:00", "04:00", "08:00", "12:00", "16:00", "20:00", "24:00"].map((t, i) => (
        <g key={t}>
          <path d={`M${x0 + i * 8 * step} ${base} v5`} stroke="#0bb4c6" strokeWidth="1.2" />
          <text x={x0 + 4 + i * 8 * step} y="577.2" textAnchor="middle" fontSize="17" fill="currentColor">
            {t}
          </text>
        </g>
      ))}
    </svg>
  );
}

/* ---------- usage ranking ---------- */

const RANK = [
  { name: "万达广场路面", n: 44, bar: "bg-[#1289e9]", badge: "#c15a52" },
  { name: "万达广场地下...", n: 42, bar: "bg-[#f77573]", badge: "#bd9350" },
  { name: "新吴区微纳园", n: 42, bar: "bg-[#56d1e3]", badge: "#1b6fd0" },
  { name: "无锡交通旅游", n: 26, bar: "bg-[#fab347]", badge: "#34669d" },
  { name: "小三里桥", n: 25, bar: "bg-[#8b79f8]", badge: "#34669d" },
  { name: "老人大", n: 23, bar: "bg-[#1289e9]", badge: "#34669d" },
  { name: "清明桥", n: 23, bar: "bg-[#f77573]", badge: "#34669d" },
  { name: "新吴区软件园", n: 22, bar: "bg-[#56d1e3]", badge: "#34669d" },
  { name: "梁溪景贤路", n: 18, bar: "bg-[#fab347]", badge: "#34669d" },
  { name: "无锡人民医院", n: 16, bar: "bg-[#8b79f8]", badge: "#34669d" },
];

function UsageRank() {
  return (
    <div className="flex flex-col pl-[54px] pt-[11px] text-[17.5px] leading-none">
      <div className="mb-[15px] flex h-[31px] items-center font-bold text-[#02f6fc]">
        <div className="w-[53px] text-center">排名</div>
        <div className="w-[157px] text-center">小区名称</div>
        <div className="pl-[32px]">使用数量</div>
      </div>
      {RANK.map((r, i) => (
        <div key={r.name} className="flex h-[31.3px] items-center">
          <div className="relative h-[22px] w-[61px]">
            <svg className="absolute inset-0" width="61" height="22" viewBox="0 0 61 22">
              <path d="M7 0 L14 22 H0 Z M61 0 V22 H50 L59.5 0 Z" fill="#15466b" />
              <path d="M7 0 H59.5 L50 22 H14 Z" fill={r.badge} />
            </svg>
            <span className="relative flex h-[18px] items-center justify-center text-[14.3px] leading-none text-[#05d9f0]">
              NO.{i + 1}
            </span>
          </div>
          <div className="w-[162px] whitespace-nowrap pb-[3px] text-center text-[#04dcf0]">{r.name}</div>
          <div
            className={`ml-[12.5px] flex h-[22px] items-center rounded-full pl-[10.5px] text-[16.5px] text-white ${r.bar}`}
            style={{ width: r.n * 2.59 }}
          >
            {r.n}
          </div>
        </div>
      ))}
    </div>
  );
}

/* ---------- devices ---------- */

const DEVICES = [
  { name: "设备在线", n: 52, color: "#068abc" },
  { name: "设备使用", n: 37, color: "#6bd708" },
  { name: "设备离线", n: 5, color: "#6274ff" },
];

function Donut() {
  const total = 94;
  let acc = 0;
  const pt = (r: number, f: number) => {
    const a = f * Math.PI * 2 - Math.PI / 2;
    return `${(80 + r * Math.cos(a)).toFixed(2)} ${(80 + r * Math.sin(a)).toFixed(2)}`;
  };
  return (
    <svg width="160" height="160" viewBox="0 0 160 160" fill="none">
      {DEVICES.map((d) => {
        const a = acc / total;
        acc += d.n;
        const b = acc / total;
        const large = b - a > 0.5 ? 1 : 0;
        return (
          <path
            key={d.name}
            d={`M${pt(73.5, a)} A73.5 73.5 0 ${large} 1 ${pt(73.5, b)} L${pt(52, b)} A52 52 0 ${large} 0 ${pt(52, a)} Z`}
            fill={d.color}
            stroke="#021545"
            strokeWidth="8.7"
            strokeLinejoin="bevel"
          />
        );
      })}
      <path d="M74.8 60.5 A20.8 20.8 0 1 0 99.5 88.5" stroke="#fb0207" strokeWidth="6.8" />
      <path d="M99.5 88.5 A20.8 20.8 0 0 0 100.7 82" stroke="#fff" strokeWidth="6.8" />
      <path
        d="M79.8 54.5 V81 H105.5 A26 26 0 0 0 79.8 54.5 Z"
        fill="#053447"
        stroke="#fff"
        strokeWidth="3.4"
        strokeLinejoin="round"
      />
    </svg>
  );
}

/* ---------- amount area chart ---------- */

function smoothPath(p: [number, number][]) {
  const smooth = 0.5;
  let d = `M${p[0][0]} ${p[0][1]}`;
  let c0: [number, number] = p[0];
  for (let i = 1; i < p.length; i++) {
    const [x, y] = p[i];
    const [px, py] = p[i - 1];
    let c1: [number, number] = [x, y];
    let next: [number, number] = [x, y];
    if (i < p.length - 1) {
      const [nx, ny] = p[i + 1];
      const lp = Math.hypot(x - px, y - py);
      const ln = Math.hypot(nx - x, ny - y);
      const ratio = ln / (ln + lp);
      const clamp = (v: number, a: number, b: number) => Math.max(Math.min(a, b), Math.min(Math.max(a, b), v));
      next = [
        clamp(x + (nx - px) * smooth * ratio, nx, x),
        clamp(y + (ny - py) * smooth * ratio, ny, y),
      ];
      c1 = [
        clamp(x - ((next[0] - x) * lp) / ln, px, x),
        clamp(y - ((next[1] - y) * lp) / ln, py, y),
      ];
      next = [x + ((x - c1[0]) * ln) / lp, y + ((y - c1[1]) * ln) / lp];
    }
    d += ` C${c0[0].toFixed(2)} ${c0[1].toFixed(2)} ${c1[0].toFixed(2)} ${c1[1].toFixed(2)} ${x.toFixed(2)} ${y.toFixed(2)}`;
    c0 = next;
  }
  return d;
}

function AmountArea() {
  const x0 = 632.7;
  const step = 14.51;
  const base = 879;
  const line = smoothPath(SERIES.map((v, i) => [x0 + i * step, base - v * 2.43]));
  return (
    <svg width="819" height="200" viewBox="551 716 819 200">
      <defs>
        <linearGradient id="amount" gradientUnits="userSpaceOnUse" x1="0" y1="735" x2="0" y2="879">
          <stop offset="0.5" stopColor="#038586" />
          <stop offset="1" stopColor="#b0dedd" />
        </linearGradient>
      </defs>
      <path d={`${line} V${base} H${x0} Z`} fill="url(#amount)" />
      <path d={line} fill="none" stroke="#7a7376" strokeWidth="1.6" />
      <path d={`M${x0} ${base + 0.2} H1329.2`} stroke="#4b9a9c" strokeWidth="1.2" />
      <path d="M1329.2 879 H1346" stroke="#1d3a55" strokeWidth="1.5" />
      <path d="M1343.5 873 L1355.5 879 L1343.5 885 L1346 879 Z" fill="#27405e" />
      {[0, 10, 20, 30, 40, 50, 60].map((v) => (
        <text key={v} x="626" y={base - v * 2.43 + 4} textAnchor="end" fontSize="16.2" fill="#6ab3ea">
          {v}
        </text>
      ))}
      {Array.from({ length: 13 }, (_, i) => (
        <text key={i} x={x0 + i * 4 * step} y="897.5" textAnchor="middle" fontSize="15.8" fill="#6ab3ea">
          {`${String(i * 2).padStart(2, "0")}:00`}
        </text>
      ))}
    </svg>
  );
}

/* ---------- device ranking ---------- */

const TICKER = [
  { no: 7, name: "新吴区微纳园", n: 42, gap: "mb-[5px]" },
  { no: 8, name: "新吴区软件园", n: 22, gap: "" },
  { no: 9, name: "无锡人民医院", n: 16, gap: "" },
  { no: 10, name: "无锡交通旅游", n: 26, gap: "mb-[6px]" },
  { no: 1, name: "小三里桥", n: 25, gap: "" },
  { no: 2, name: "老人大", n: 23, gap: "" },
];

function DeviceRank() {
  return (
    <div className="flex flex-col pl-[25px] pt-[12px] text-[17.5px] leading-none">
      <div className="flex h-[28px] items-center font-bold text-[#02f6fc]">
        <div className="w-[59px] pl-[4px]">排名</div>
        <div className="w-[290px]">小区名称</div>
        <div>使用数量</div>
      </div>
      <div className="h-[153px] overflow-hidden text-[#04dcf0]">
        <div className="-mt-[27px] flex flex-col">
          {TICKER.map((t) => (
            <div key={t.no} className={`flex h-[31.3px] shrink-0 items-center ${t.gap}`}>
              <div className="w-[33px] text-center text-[16px]">{t.no}</div>
              <div className="ml-[24px] w-[309px]">{t.name}</div>
              <div className="w-[40px] text-center text-[16px]">{t.n}</div>
            </div>
          ))}
        </div>
      </div>
    </div>
  );
}

/* ---------- edge meter ---------- */

function EdgeMeter() {
  return (
    <div className="absolute right-0 top-[114px] flex h-[59px] w-[10px] flex-col items-end gap-[1px] rounded-l-[3px] border border-r-0 border-[#10202c] bg-[#2b3a4c] pr-[2px] pt-[6px]">
      {Array.from({ length: 23 }, (_, i) => (
        <span
          key={i}
          className="h-px w-[4px] shrink-0"
          style={{ backgroundColor: i < 6 ? "#152330" : `hsl(${45 + (i - 6) * 6} 55% 60%)` }}
        />
      ))}
    </div>
  );
}

export default function App() {
  return (
    <div className="relative flex h-[937px] w-[1920px] flex-col overflow-hidden bg-[#043447] font-['Open_Sans','Noto_Sans_CJK_SC',sans-serif] text-[#05e6fb]">
      <Header />
      <main className="flex flex-col gap-[27px] pl-[49px]">
        <div className="flex h-[478px] gap-[18px]">
          <Panel title="今日统计" w={456} h={478} className="z-10 h-[478px] w-[456px]">
            <div className="ml-[6.5px] mt-[8px] grid w-[442px] grid-cols-2">
              {TODAY.map(([label, value]) => (
                <div key={label} className="h-[83px] text-center">
                  <div className="flex h-[42px] items-center justify-center whitespace-nowrap text-[20.8px] leading-none text-[#04dcf0]">
                    {label}
                  </div>
                  <div className="flex h-[36px] items-center justify-center text-[30px] font-bold leading-none">{value}</div>
                </div>
              ))}
            </div>
            <h3 className="mt-[15px] flex h-[28px] items-center justify-center text-[17.4px] font-bold leading-none">
              订单趋势图
            </h3>
            <OrderBars />
          </Panel>
          <CityMap />
          <Panel title="使用率排行统计" w={456} h={478} className="z-10 h-[478px] w-[456px]">
            <UsageRank />
          </Panel>
        </div>
        <div className="flex h-[281px]">
          <Panel title="设备统计" w={456} h={281} tall className="h-[281px] w-[456px]">
            <div className="flex pl-[22px] pt-[5px]">
              <ul className="flex w-[208px] flex-col pt-[33px] text-[19.1px] leading-none text-[#04dcf0]">
                {DEVICES.map((d) => (
                  <li key={d.name} className="flex h-[36.5px] items-center whitespace-nowrap">
                    <svg width="13" height="13" viewBox="0 0 13 13" className="mr-[6px] shrink-0">
                      <circle cx="6.5" cy="6.5" r="6.4" fill="#06234c" />
                      <circle cx="6.5" cy="6.5" r="5.2" fill={d.color} />
                    </svg>
                    <span>
                      {d.name}
                      <span className="whitespace-pre tracking-[1.6px]"> --- </span>
                      {d.n}个
                    </span>
                  </li>
                ))}
              </ul>
              <Donut />
            </div>
          </Panel>
          <Panel title="金额汇总" w={819} h={281} sx={1.33} tall className="ml-[46px] h-[281px] w-[819px]">
            <AmountArea />
          </Panel>
          <Panel title="设备数量排行统计" w={456} h={281} tall className="ml-[45px] h-[281px] w-[456px]">
            <DeviceRank />
          </Panel>
        </div>
      </main>
      <EdgeMeter />
    </div>
  );
}
